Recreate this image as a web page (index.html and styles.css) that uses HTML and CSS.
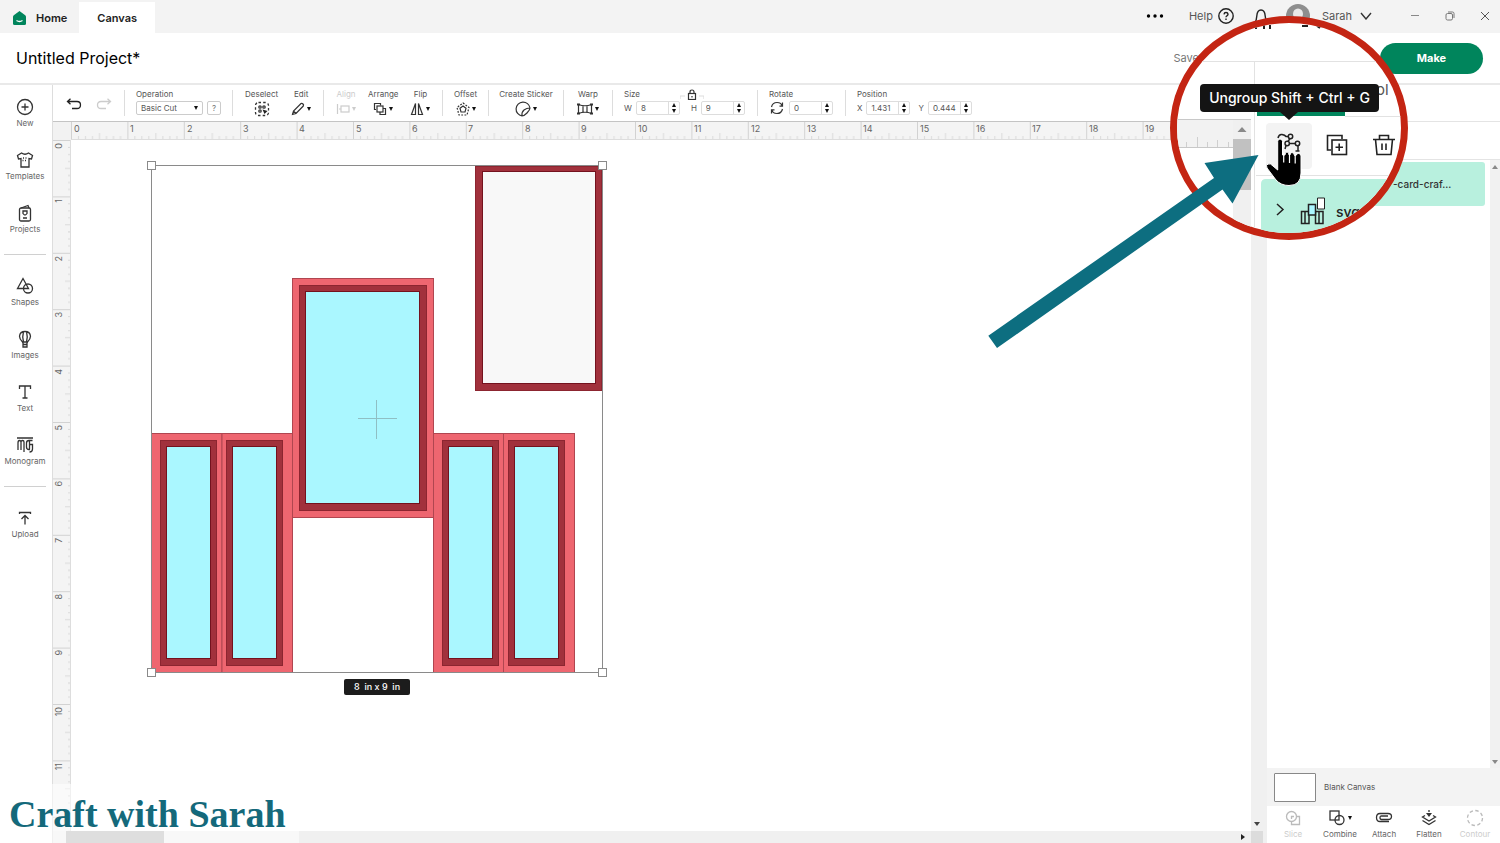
FILE: index.html
```html
<!DOCTYPE html>
<html lang="en">
<head>
<meta charset="utf-8">
<title>Untitled Project</title>
<link rel="stylesheet" href="styles.css">
</head>
<body>
<div class="app">
  <header class="titlebar">
    <nav class="tabs">
      <a class="tab" href="#home"><svg width="13" height="14" viewBox="0 0 13 14"><path d="M6.500 0 12.200 4.200Q13 4.800 13 5.600V12.500Q13 14 11.500 14H1.500Q0 14 0 12.500V5.600Q0 4.800.8 4.200Z" fill="#00855c"/><path d="M3.500 9.500Q6.500 11.500 9.500 9.500" fill="none" stroke="#fff" stroke-width="1.300"/></svg>Home</a>
      <a class="tab tab-active" href="#canvas">Canvas</a>
    </nav>
    <div class="account">
      <button class="plain dots" aria-label="More"><svg width="18" height="6" viewBox="0 0 18 6"><circle cx="2.500" cy="3" r="1.700"/><circle cx="9" cy="3" r="1.700"/><circle cx="15.500" cy="3" r="1.700"/></svg></button>
      <button class="plain help">Help <svg width="16" height="16" viewBox="0 0 16 16" fill="none" stroke="#222" stroke-width="1.400"><circle cx="8" cy="8" r="7.200"/><path d="M6 6.300Q6.200 4.500 8 4.500T10 6.200Q10 7.200 8.900 7.800 8 8.300 8 9.300M8 10.600V12"/></svg></button>
      <button class="plain bell" aria-label="Notifications"><svg width="18" height="16" viewBox="0 0 18 16" fill="none" stroke="#222" stroke-width="1.400"><path d="M3 15Q4.500 12 4.800 8 5.200 2 9 2T13.200 8Q13.500 12 15 15"/></svg></button>
      <span class="avatar"><svg width="24" height="24" viewBox="0 0 24 24"><circle cx="12" cy="12" r="12" fill="#8e8e8e"/><ellipse cx="12" cy="10" rx="5" ry="5.500" fill="#e9e9e9"/></svg></span>
      <button class="plain user">Sarah <svg width="12" height="8" viewBox="0 0 12 8" fill="none" stroke="#333" stroke-width="1.400"><path d="M1 1 6 7 11 1"/></svg></button>
      <div class="window-buttons">
        <button class="plain" aria-label="Minimize"><svg width="10" height="10" viewBox="0 0 10 10" stroke="#888"><path d="M1 4.500H9"/></svg></button>
        <button class="plain" aria-label="Restore"><svg width="10" height="10" viewBox="0 0 10 10" fill="none" stroke="#777"><rect x="1" y="2.500" width="6.500" height="6.500" rx="1.500"/><path d="M3 1H7.500Q9 1 9 2.500V7"/></svg></button>
        <button class="plain" aria-label="Close"><svg width="10" height="10" viewBox="0 0 10 10" stroke="#555"><path d="M1 1 9 9M9 1 1 9"/></svg></button>
      </div>
    </div>
  </header>

  <div class="project">
    <h1>Untitled Project*</h1>
    <div class="project-actions">
      <button class="plain save">Save</button>
      <button class="make">Make</button>
    </div>
  </div>

  <div class="body">
    <nav class="sidebar">
      <button class="plain tool"><svg width="18" height="18" viewBox="0 0 18 18"><circle cx="9" cy="9" r="7.500"/><path d="M9 5.500V12.500M5.500 9H12.500"/></svg>New</button>
      <button class="plain tool"><svg width="18" height="18" viewBox="0 0 18 18"><path d="M5.500 2 1.500 4.500 2.500 8 5 7.500V16H13V7.500L15.500 8 16.500 4.500 12.500 2Q9 4.500 5.500 2Z"/><path d="M7 7H11M6.500 9.500H11.500" stroke-dasharray="1 1.500"/></svg>Templates</button>
      <button class="plain tool"><svg width="18" height="18" viewBox="0 0 18 18"><rect x="3.500" y="4" width="11" height="13" rx="1.500"/><path d="M5 4 12 1.500 13 4M7 7H11V9.500Q9 12.500 7 9.500ZM7 14H11"/></svg>Projects</button>
      <hr>
      <button class="plain tool"><svg width="18" height="18" viewBox="0 0 18 18"><path d="M7 1.500 1.500 11.500H12.500Z"/><circle cx="12" cy="11.500" r="4.500"/></svg>Shapes</button>
      <button class="plain tool"><svg width="18" height="18" viewBox="0 0 18 18"><path d="M6.500 12Q3.500 9 3.500 6.200 4 1.500 9 1.500T14.500 6.200Q14.500 9 11.500 12ZM7.500 12Q6 7 7.500 1.500M10.500 12Q12 7 10.500 1.500M6.500 12 7.500 14.500M11.500 12 10.500 14.500M7 14.500H11V17H7Z"/></svg>Images</button>
      <button class="plain tool"><svg width="18" height="18" viewBox="0 0 18 18"><path d="M3.500 6V3H14.500V6M9 3V15M6.500 15H11.500"/></svg>Text</button>
      <button class="plain tool"><svg width="18" height="18" viewBox="0 0 18 18"><path d="M1 2H17M2 14V7Q2 4.500 3.500 4.500T5 6V14M5 6Q5 4.500 6.500 4.500T8 6V16M16.500 4.500H13Q10.500 4.500 10.500 7V11Q10.500 13.500 13 13.500H14M13.500 8.500H16.500V13Q16.500 16 13.500 16M13.500 4.500V13.500"/></svg>Monogram</button>
      <hr>
      <button class="plain tool"><svg width="18" height="18" viewBox="0 0 18 18"><path d="M3.500 5V3.500H14.500V5M9 15.500V7M5.500 10 9 6.500 12.500 10"/></svg>Upload</button>
    </nav>

    <main class="main">
      <div class="toolbar">
        <div class="group g-history">
          <button class="plain" aria-label="Undo"><svg width="16" height="12" viewBox="0 0 16 12" fill="none" stroke="#222" stroke-width="1.300"><path d="M1.500 3.500H11Q14.500 3.500 14.500 7T11 10.500H6M4.500.8 1.500 3.500 4.500 6.200"/></svg></button>
          <button class="plain" aria-label="Redo" disabled><svg width="16" height="12" viewBox="0 0 16 12" fill="none" stroke="#ccc" stroke-width="1.300"><path d="M14.500 3.500H5Q1.500 3.500 1.500 7T5 10.500H10M11.500.8 14.500 3.500 11.500 6.200"/></svg></button>
        </div>
        <div class="group g-operation">
          <div class="field">
            <label for="op">Operation</label>
            <div class="row">
              <span class="select"><select id="op"><option>Basic Cut</option></select><i class="caret"></i></span>
              <button class="hint">?</button>
            </div>
          </div>
        </div>
        <div class="group g-edit">
          <button class="plain action">Deselect<span><svg width="16" height="16" viewBox="0 0 16 16" fill="none" stroke="#333" stroke-width="1.300"><rect x="1.500" y="1.500" width="13" height="13" rx="3" stroke-dasharray="2.500 2.200"/><circle cx="6" cy="6" r="1.200"/><circle cx="10" cy="6" r="1.200"/><circle cx="6" cy="10" r="1.200"/><path d="M8.500 8.500 13.500 10 10.500 13Z" fill="#222" stroke="none"/></svg></span></button>
          <button class="plain action">Edit<span><svg width="14" height="14" viewBox="0 0 14 14" fill="none" stroke="#333" stroke-width="1.200"><path d="M1.500 12.500 2.500 9 10 1.500Q11 1 12 2T12.300 4L5 11.500ZM2.500 9 5 11.500"/></svg><i class="caret"></i></span></button>
        </div>
        <div class="group g-arrange">
          <button class="plain action" disabled>Align<span><svg width="14" height="14" viewBox="0 0 14 14" fill="none" stroke="#ccc" stroke-width="1.200"><path d="M1.500 2V12M3 7H5"/><rect x="5" y="4" width="8" height="6"/></svg><i class="caret"></i></span></button>
          <button class="plain action">Arrange<span><svg width="14" height="14" viewBox="0 0 14 14" fill="none" stroke="#333" stroke-width="1.200"><path d="M3 7.500H1.500V1.500H7.500V3.500M10 6.500H12.500V12.500H7V10"/><rect x="4" y="4" width="6" height="6"/></svg><i class="caret"></i></span></button>
          <button class="plain action">Flip<span><svg width="14" height="14" viewBox="0 0 14 14" fill="none" stroke="#333" stroke-width="1.200"><path d="M5.500 1.500V12.500H1.500ZM8.500 1.500V12.500H12.500Z"/></svg><i class="caret"></i></span></button>
        </div>
        <div class="group g-offset">
          <button class="plain action">Offset<span><svg width="14" height="14" viewBox="0 0 14 14" fill="none" stroke="#333" stroke-width="1.200"><path d="M7 4 10 6.300 9 10H5L4 6.300Z"/><path d="M7 1 13 5.500 11 13H3L1 5.500Z" stroke-dasharray="1.800 1.400"/></svg><i class="caret"></i></span></button>
        </div>
        <div class="group g-sticker">
          <button class="plain action">Create Sticker<span><svg width="16" height="16" viewBox="0 0 16 16" fill="none" stroke="#333" stroke-width="1.200"><path d="M7 15A7 7 0 1 1 15 7Q15 9 12 12T7 15ZM7 15Q6.500 11 9 9T15 7"/></svg><i class="caret"></i></span></button>
        </div>
        <div class="group g-warp">
          <button class="plain action">Warp<span><svg width="16" height="12" viewBox="0 0 16 12" fill="none" stroke="#333" stroke-width="1.200"><path d="M1.500 1.500Q8 4 14.500 1.500V10.500Q8 8 1.500 10.500ZM6 2.500V9.500M10 2.500V9.500"/><path d="M0 1.500H3M13 1.500H16M0 10.500H3M13 10.500H16" stroke-width="2"/></svg><i class="caret"></i></span></button>
        </div>
        <div class="group g-size">
          <div class="field">
            <div class="size-head"><span>Size</span><svg width="24" height="11" viewBox="0 0 24 11" fill="none" stroke="#333" stroke-width="1.200"><rect x="8.500" y="4.500" width="7" height="6"/><path d="M10 4.500V3Q10 1 12 1T14 3V4.500M12 7V8.500"/><path d="M0 10V7H5M24 10V7H19" stroke="#ddd"/></svg></div>
            <div class="row">
              <label for="w">W</label><span class="stepper"><input id="w" value="8"><i class="spin"></i></span>
              <label class="second" for="h">H</label><span class="stepper"><input id="h" value="9"><i class="spin"></i></span>
            </div>
          </div>
        </div>
        <div class="group g-rotate">
          <div class="field">
            <label for="rot">Rotate</label>
            <div class="row"><svg width="16" height="14" viewBox="0 0 16 14" fill="none" stroke="#333" stroke-width="1.200"><path d="M2.500 6Q3.500 1.500 8 1.500T13 5M13.500 1.500V5.200H10.500M13.500 8Q12.500 12.500 8 12.500T3 9M2.500 12.500V8.800H5.500"/></svg><span class="stepper"><input id="rot" value="0"><i class="spin"></i></span></div>
          </div>
        </div>
        <div class="group g-position">
          <div class="field">
            <span>Position</span>
            <div class="row">
              <label for="px">X</label><span class="stepper"><input id="px" value="1.431"><i class="spin"></i></span>
              <label class="y-label" for="py">Y</label><span class="stepper"><input id="py" value="0.444"><i class="spin"></i></span>
            </div>
          </div>
        </div>
      </div>

      <div class="workspace">
        <div class="corner"></div>
        <svg class="ruler ruler-x">
          <defs><pattern id="tx" width="56.400" height="18" patternUnits="userSpaceOnUse"><path d="M.5 0V18" stroke="#d2d2d2"/><path d="M7.500 14V18M14.500 14V18M21.500 14V18M28.500 11V18M35.500 14V18M42.500 14V18M49.500 14V18" stroke="#dadada"/></pattern></defs>
          <rect width="100%" height="18" fill="url(#tx)"/>
          <text x="3" y="10">0</text><text x="59" y="10">1</text><text x="116" y="10">2</text><text x="172" y="10">3</text><text x="228" y="10">4</text><text x="285" y="10">5</text><text x="341" y="10">6</text><text x="397" y="10">7</text><text x="454" y="10">8</text><text x="510" y="10">9</text><text x="567" y="10">10</text><text x="623" y="10">11</text><text x="680" y="10">12</text><text x="736" y="10">13</text><text x="792" y="10">14</text><text x="849" y="10">15</text><text x="905" y="10">16</text><text x="961" y="10">17</text><text x="1018" y="10">18</text><text x="1074" y="10">19</text>
        </svg>
        <svg class="ruler ruler-y">
          <defs><pattern id="ty" width="19" height="56.400" patternUnits="userSpaceOnUse"><path d="M0 .5H19" stroke="#d2d2d2"/><path d="M15 7.500H19M15 14.500H19M15 21.500H19M12 28.500H19M15 35.500H19M15 42.500H19M15 49.500H19" stroke="#dadada"/></pattern></defs>
          <rect width="19" height="100%" fill="url(#ty)"/>
          <g text-anchor="end">
            <text transform="translate(9 3) rotate(-90)">0</text><text transform="translate(9 59) rotate(-90)">1</text><text transform="translate(9 116) rotate(-90)">2</text><text transform="translate(9 172) rotate(-90)">3</text><text transform="translate(9 229) rotate(-90)">4</text><text transform="translate(9 285) rotate(-90)">5</text><text transform="translate(9 341) rotate(-90)">6</text><text transform="translate(9 398) rotate(-90)">7</text><text transform="translate(9 454) rotate(-90)">8</text><text transform="translate(9 510) rotate(-90)">9</text><text transform="translate(9 567) rotate(-90)">10</text><text transform="translate(9 623) rotate(-90)">11</text>
          </g>
        </svg>
        <div class="canvas">
          <svg class="art">
            <g transform="translate(-71 -140)">
              <g fill="#ee6670" stroke="#b04650">
                <rect x="151.500" y="433.500" width="70.500" height="239"/><rect x="222" y="433.500" width="70.500" height="239"/>
                <rect x="433.500" y="433.500" width="70" height="239"/><rect x="503.500" y="433.500" width="71" height="239"/>
                <rect x="292.500" y="278.500" width="141" height="239"/>
              </g>
              <g fill="#a1313c" stroke="#8c2530">
                <rect x="160.500" y="440.500" width="56" height="225"/><rect x="226.500" y="440.500" width="56" height="225"/>
                <rect x="442.500" y="440.500" width="56" height="225"/><rect x="508.500" y="440.500" width="56" height="225"/>
                <rect x="299.500" y="285.500" width="127" height="225"/><rect x="475.500" y="166.500" width="126" height="224"/>
              </g>
              <g fill="#aaf7ff" stroke="#74121e">
                <rect x="166.500" y="446.500" width="44" height="212"/><rect x="232.500" y="446.500" width="44" height="212"/>
                <rect x="448.500" y="446.500" width="44" height="212"/><rect x="514.500" y="446.500" width="44" height="212"/>
                <rect x="305.500" y="291.500" width="114" height="212"/><rect x="482.500" y="171.500" width="113" height="212" fill="#f8f8f8"/>
              </g>
              <path d="M358 418.500H397M376.500 400V439" stroke="#8fbfc4"/>
              <rect x="151.500" y="165.500" width="451" height="507" fill="none" stroke="#8a8a8a"/>
              <g fill="#fff" stroke="#8a8a8a"><rect x="147.500" y="161.500" width="8" height="8"/><rect x="598.500" y="161.500" width="8" height="8"/><rect x="147.500" y="668.500" width="8" height="8"/><rect x="598.500" y="668.500" width="8" height="8"/></g>
            </g>
          </svg>
          <div class="dimension">8&nbsp; in x 9&nbsp; in</div>
        </div>
      </div>
      <div class="hscroll"><div class="hthumb"></div><i class="tri-right"></i></div>
    </main>

    <div class="vscroll"><i class="tri-down"></i><div class="vcorner"></div></div>

    <aside class="panel">
      <div class="panel-tabs"></div>
      <div class="panel-tools"></div>
      <div class="layers">
        <div class="layer-list"><div class="layer">-card-craf...</div></div>
        <div class="layer-scroll"><i class="tri-up"></i><i class="tri-down"></i></div>
      </div>
      <div class="blank"><span class="swatch"></span>Blank Canvas</div>
      <div class="combine">
        <button class="plain tool" disabled><svg width="18" height="18" viewBox="0 0 18 18"><circle cx="7.500" cy="7.500" r="5"/><path d="M12.500 7.500H15.500V15.500H7.500V12.500M7.500 10V7.500H10"/></svg>Slice</button>
        <button class="plain tool"><span class="with-caret"><svg width="18" height="18" viewBox="0 0 18 18"><rect x="2" y="2" width="9" height="9"/><circle cx="11.500" cy="11" r="4.500"/></svg><i class="caret"></i></span>Combine</button>
        <button class="plain tool"><svg width="18" height="18" viewBox="0 0 18 18"><path d="M14 12.500H5Q1.500 12.500 1.500 8.500T5 4.500H13Q16.500 4.500 16.500 7.500T13 10.500H6.500Q5 10.500 5 8.700T6.500 7H13"/></svg>Attach</button>
        <button class="plain tool"><svg width="18" height="18" viewBox="0 0 18 18"><path d="M5 6.500 2.500 8 9 12 15.500 8 13 6.500M2.500 11.500 9 15.500 15.500 11.500M9 1V3"/><path d="M6 4H12L9 8Z" fill="#333" stroke="none"/></svg>Flatten</button>
        <button class="plain tool" disabled><svg width="18" height="18" viewBox="0 0 18 18"><circle cx="9" cy="9" r="7.500" stroke-dasharray="3.500 2.400"/></svg>Contour</button>
      </div>
    </aside>
  </div>

  <div class="watermark">Craft with Sarah</div>

  <div class="lens">
    <svg class="lens-view" width="224" height="210" viewBox="1177 23 224 210">
      <path d="M1177 61.500H1401M1254.500 61V233" stroke="#e2e2e2" fill="none"/>
      <path d="M1256 29V25M1264 29V25M1270 29V25M1302 26H1308M1317 26 1320 28" stroke="#222" stroke-width="2" fill="none"/>
      <path d="M1177 119H1251V147H1177Z" fill="#f2f2f2"/><path d="M1177 119.500H1251M1177 147.500H1233" stroke="#c8c8c8"/>
      <path d="M1186.500 142V147M1197.500 137V147M1207.500 142V147M1217.500 140V147M1228.500 142V147" stroke="#cfcfcf"/>
      <path d="M1233 120H1251V233H1233Z" fill="#f0f0f0"/><path d="M1233 139H1251V190H1233Z" fill="#c1c1c1"/><path d="M1237.500 132 1242 127 1246.500 132Z" fill="#8a8a8a"/>
      <path d="M1345 116.500H1401M1256 175.500H1401" stroke="#e2e2e2"/>
      <path d="M1257 112H1345V116H1257Z" fill="#00855c"/>
      <path d="M1261 233V184Q1261 179 1266 179H1401V233Z" fill="#b8f0de"/>
      <path d="M1277 204 1283 209.500 1277 215" fill="none" stroke="#222" stroke-width="1.500"/>
      <g fill="#b8f0de" stroke="#222" stroke-width="1.500"><path d="M1301.500 211.500H1305V223.500H1301.500ZM1305 211.500H1309V223.500H1305ZM1315.500 211.500H1319V223.500H1315.500ZM1319 211.500H1323V223.500H1319Z"/><path d="M1308.500 204.500H1315.500V215H1308.500Z" fill="#aaf7ff"/><path d="M1317.500 198H1324.500V209H1317.500Z" fill="#fff" stroke-width="1"/></g>
    </svg>
    <button class="plain lens-tool lens-ungroup" aria-label="Ungroup"></button>
    <button class="plain lens-tool lens-duplicate" aria-label="Duplicate"><svg width="22" height="22" viewBox="0 0 22 22" fill="none" stroke="#222" stroke-width="1.600"><path d="M5 16H1.500V1.500H16V5"/><rect x="6" y="6" width="14.500" height="14.500"/><path d="M13.200 9.500V17M9.500 13.200H17"/></svg></button>
    <button class="plain lens-tool lens-delete" aria-label="Delete"><svg width="22" height="22" viewBox="0 0 22 22" fill="none" stroke="#222" stroke-width="1.600"><path d="M0 5.500H22M6.500 5V1.500H15.500V5M2.500 5.500 4 20.500H18L19.500 5.500M9 9.500V16M13 9.500V16"/></svg></button>
    <span class="lens-tab">ol</span>
    <span class="lens-layer">svg</span>
    <div class="tooltip">Ungroup Shift + Ctrl + G</div>
    <svg class="lens-hand" width="42" height="56" viewBox="1263 131 42 56">
      <path d="M1278 138Q1279 134 1282 134.500T1286 136.500H1288M1290 138.500 1288 141.500M1289.500 143.500H1295M1298 146V150.500M1295.500 151H1299.500M1286 145.500 1285 149" fill="none" stroke="#222" stroke-width="1.500"/>
      <g fill="none" stroke="#222" stroke-width="1.500"><circle cx="1290.500" cy="136.500" r="2.200"/><circle cx="1287.200" cy="143.500" r="2.200"/><circle cx="1297.500" cy="143.500" r="2.200"/></g>
      <path d="M1277.700 141.500Q1277.700 139 1280 139T1282.500 141.500V155H1285Q1285 152 1287 152T1289 155H1290Q1290 152.500 1292 152.500T1294.500 155.500H1296Q1296 153.500 1298.500 153.500T1301 156V173Q1301 185.500 1289 185.500 1281 185.500 1276 180L1267 168Q1265.500 165 1268 164T1273 166L1277.700 170Z" fill="#000" stroke="#fff" stroke-width="1"/>
      <path d="M1283.700 152.500V162.500M1289.500 153.500V163M1295.200 154.500V163.500" stroke="#fff" stroke-width="1.200"/>
    </svg>
  </div>
  <svg class="pointer" width="271" height="193" viewBox="988 155 271 193"><path d="M1258.500 155 1232.500 203.500 1222.500 189.500 997 348 988.300 335.700 1214 178 1204.500 163Z" fill="#0d6e80"/></svg>
</div>
</body>
</html>
```

FILE: styles.css
```css
*, *::before, *::after { box-sizing: border-box; }
body { margin: 0; font-family: Inter, "Liberation Sans", sans-serif; font-size: 8px; line-height: 10px; color: #555; background: #fff; }
svg { display: block; flex: none; }
.app { position: relative; height: 100vh; display: flex; flex-direction: column; overflow: hidden; }
.plain { border: 0; padding: 0; background: none; font: inherit; color: inherit; }

.titlebar { height: 33px; display: flex; justify-content: space-between; background: #f3f3f3; padding-top: 2px; }
.tabs { display: flex; }
.tab { display: flex; align-items: center; gap: 10px; padding: 0 12px 0 13px; font-size: 11px; font-weight: 600; color: #222; text-decoration: none; }
.tab-active { background: #fff; padding: 0 18px; }
.account { display: flex; align-items: center; height: 27px; padding-right: 10px; font-size: 11px; }
.help, .user { display: flex; align-items: center; gap: 5px; }
.help { margin-left: 25px; }
.user { gap: 8px; margin-left: 12px; }
.bell { margin-left: 18px; }
.avatar { margin-left: 16px; }
.window-buttons { display: flex; gap: 25px; margin-left: 38px; }

.project { height: 50px; display: flex; justify-content: space-between; align-items: center; padding: 0 17px 0 16px; }
.project h1 { margin: 0; font-size: 16px; line-height: 20px; font-weight: 400; color: #000; }
.project-actions { display: flex; align-items: center; gap: 181px; font-size: 11px; color: #777; }
.make { width: 103px; height: 31px; border: 0; border-radius: 16px; background: #00855c; color: #fff; font: 700 11px Inter, sans-serif; }

.body { flex: 1; min-height: 0; display: flex; border-top: 2px solid #e9e9e9; }
.sidebar { width: 52px; flex: none; display: flex; flex-direction: column; padding: 3px 2px 0 0; }
.sidebar hr { width: 42px; height: 1px; margin: 7px 4px 12px; border: 0; background: #d0d0d0; }
.tool { display: flex; flex-direction: column; align-items: center; gap: 3px; color: #666; }
.tool svg { fill: none; stroke: #333; stroke-width: 1.3; }
.tool:disabled { color: #ccc; }
.tool:disabled svg { stroke: #bbb; }
.sidebar .tool { height: 53px; padding-top: 10px; gap: 2px; }

.main { flex: 1; min-width: 0; display: flex; flex-direction: column; border-left: 1px solid #ddd; }
.toolbar { height: 36px; flex: none; display: flex; align-items: center; }
.group { display: flex; height: 26px; flex: none; border-left: 1px solid #ddd; }
.g-history { width: 71px; border: 0; align-items: center; gap: 14px; padding: 2px 0 0 13px; }
.g-operation { width: 108px; padding-left: 11px; }
.g-edit { width: 91px; padding-left: 12px; gap: 13px; }
.g-arrange { width: 119px; padding-left: 12px; gap: 12px; }
.g-offset { width: 46px; justify-content: center; }
.g-sticker { width: 75px; justify-content: center; }
.g-warp { width: 49px; justify-content: center; }
.g-size { width: 145px; padding-left: 11px; }
.g-rotate { width: 88px; padding-left: 11px; }
.g-position { padding-left: 11px; }
.field { display: flex; flex-direction: column; gap: 2px; height: 26px; margin-top: -1px; }
.row { display: flex; align-items: center; gap: 4px; height: 14px; }
.action { display: flex; flex-direction: column; align-items: center; height: 28px; margin-top: -1px; gap: 2px; }
.action span { display: flex; align-items: center; gap: 2px; height: 16px; }
.action:disabled { color: #ccc; }
.action:disabled .caret { border-top-color: #ccc; }
.caret { flex: none; border: 2px solid transparent; border-top: 4px solid #111; border-bottom: 0; }
.select { position: relative; }
.select .caret { position: absolute; right: 5px; top: 5px; pointer-events: none; }
select { appearance: none; display: block; width: 67px; height: 14px; padding: 0 4px; border: 1px solid #ccc; border-radius: 2px; background: #fff; color: #555; font: 8px/12px Inter, sans-serif; }
.hint { width: 14px; height: 14px; padding: 0; border: 1px solid #ccc; border-radius: 2px; background: #fff; color: #777; font: 8px Inter, sans-serif; }
.stepper { display: flex; align-items: center; width: 44px; height: 14px; border: 1px solid #ddd; border-radius: 2px; }
.stepper input { width: 32px; height: 12px; padding: 0 4px; border: 0; border-right: 1px solid #ddd; background: none; color: #555; font: 8px Inter, sans-serif; }
.spin { display: block; width: 10px; height: 10px; padding: 0 3px; }
.spin::before, .spin::after { content: ""; display: block; width: 4px; border: 2px solid transparent; }
.spin::before { border-top: 0; border-bottom: 4px solid #111; margin-bottom: 2px; }
.spin::after { border-bottom: 0; border-top: 4px solid #111; }
.second { margin-left: 7px; }
.y-label { margin-left: 4px; }
.size-head { display: flex; gap: 40px; height: 10px; }

.workspace { flex: 1; min-height: 0; display: grid; grid-template: 18px 1fr / 18px 1fr; border-top: 1px solid #c4c4c4; }
.corner { background: #f2f2f2; }
.ruler { width: 100%; height: 100%; background: #f4f4f4; font-family: Inter, sans-serif; font-size: 9px; fill: #666; overflow: hidden; }
.ruler-x { border-bottom: 1px solid #ddd; }
.ruler-y { border-right: 1px solid #ddd; }
.canvas { position: relative; overflow: hidden; }
.art { width: 100%; height: 100%; }
.dimension { position: absolute; left: 273px; top: 539px; width: 66px; height: 16px; border-radius: 2px; background: #1c1c1c; color: #fff; font-size: 9px; line-height: 16px; font-weight: 500; text-align: center; }
.hscroll { height: 12px; flex: none; display: flex; align-items: center; justify-content: space-between; padding: 0 6px 0 13px; background: #f0f0f0; }
.hthumb { width: 98px; height: 12px; background: #b5b5b5; }
.tri-right { border: 3px solid transparent; border-left: 4px solid #222; border-right: 0; }
.tri-down { display: block; width: 6px; border: 3px solid transparent; border-top: 4px solid #444; border-bottom: 0; }
.tri-up { display: block; width: 6px; border: 3px solid transparent; border-bottom: 4px solid #888; border-top: 0; }
.vscroll { width: 16px; flex: none; display: flex; flex-direction: column; justify-content: flex-end; background: #f0f0f0; }
.vscroll .tri-down { margin: 0 3px 5px; }
.vcorner { width: 12px; height: 12px; background: #dcdcdc; }

.panel { width: 233px; flex: none; display: flex; flex-direction: column; }
.panel-tabs { height: 37px; border-bottom: 1px solid #e4e4e4; }
.panel-tools { height: 38px; border-bottom: 1px solid #e4e4e4; }
.layers { flex: 1; display: flex; }
.layer-list { flex: 1; padding: 2px 5px 0 0; }
.layer { height: 44px; padding-left: 126px; border-radius: 3px; background: #b8f0de; color: #333; font-size: 10px; line-height: 44px; font-weight: 500; }
.layer-scroll { width: 10px; background: #f1f1f1; display: flex; flex-direction: column; justify-content: space-between; align-items: center; padding: 5px 0 4px; }
.layer-scroll .tri-down { border-top-color: #888; }
.blank { height: 38px; display: flex; align-items: center; gap: 8px; padding-left: 7px; background: #f3f3f3; }
.swatch { width: 42px; height: 29px; border: 1px solid #888; border-radius: 1px; background: #fff; }
.combine { height: 37px; display: grid; grid-template-columns: 50px 44px 44px 46px 46px; padding: 3px 0 0 1px; }
.combine .tool { justify-content: flex-start; gap: 2px; }
.with-caret { display: flex; align-items: center; gap: 2px; }

.watermark { position: absolute; left: 0; bottom: 0; width: 299px; height: 59px; padding: 10px 0 0 9px; background: rgba(255, 255, 255, 0.55); color: #14697b; font: bold 38px/40px "Liberation Serif", serif; white-space: nowrap; }

.lens { position: absolute; top: 16px; right: 92px; width: 238px; height: 224px; border: 7px solid #c42513; border-radius: 50%; background: #fff; overflow: hidden; }
.lens-view { position: absolute; inset: 0; }
.lens-tool { position: absolute; }
.lens-ungroup { left: 89px; top: 100px; width: 46px; height: 46px; border-radius: 4px; background: #f3f3f3; }
.lens-duplicate { left: 149px; top: 111px; }
.lens-delete { left: 196px; top: 111px; }
.lens-tab { position: absolute; left: 199px; top: 58px; font-size: 15px; line-height: 18px; }
.lens-layer { position: absolute; left: 159px; top: 180px; font-size: 14px; line-height: 18px; font-weight: 500; color: #222; }
.tooltip { position: absolute; left: 23px; top: 61px; width: 179px; height: 28px; border-radius: 4px; background: #141414; color: #fff; font-size: 14px; line-height: 28px; font-weight: 500; text-align: center; white-space: nowrap; }
.tooltip::after { content: ""; position: absolute; left: 80px; top: 28px; border: 9px solid transparent; border-top: 8px solid #141414; border-bottom: 0; }
.lens-hand { position: absolute; left: 86px; top: 108px; pointer-events: none; }
.pointer { position: absolute; top: 155px; right: 241px; pointer-events: none; }
```
